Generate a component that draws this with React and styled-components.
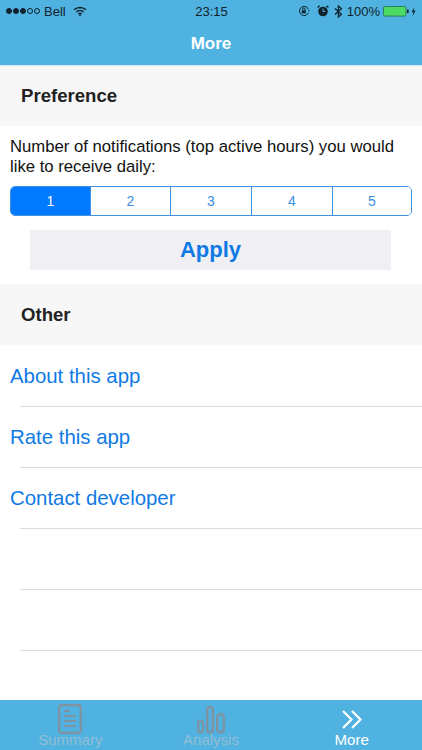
import React from "react";
import styled, { createGlobalStyle } from "styled-components";

const Global = createGlobalStyle`
  html, body { margin: 0; padding: 0; background: #fff; }
  body { font-family: "Liberation Sans", Arial, sans-serif; -webkit-font-smoothing: antialiased; }
  * { box-sizing: border-box; }
`;

const Phone = styled.div`
  width: 422px; height: 750px; display: flex; flex-direction: column; overflow: hidden; background: #fff;
`;
const Header = styled.header`
  height: 66px; flex: none; background: #50b2e0; display: flex; flex-direction: column;
  border-bottom: 1px solid #cfeaf5;
`;
const StatusBar = styled.div`
  height: 22px; padding: 0 5px 0 6px; display: grid; grid-template-columns: 1fr auto 1fr; align-items: center;
  font-size: 13px; color: #10222c;
`;
const StatusSide = styled.div`
  display: flex; align-items: center; gap: ${p => p.$gap || 4}px; justify-content: ${p => p.$end ? "flex-end" : "flex-start"};
`;
const Dots = styled.span`display: inline-flex; gap: 1px;`;
const Dot = styled.i`
  width: 6px; height: 6px; border-radius: 50%; border: 1px solid #10222c; background: ${p => p.$on ? "#10222c" : "transparent"};
`;
const Title = styled.div`
  flex: 1; display: flex; align-items: center; justify-content: center; color: #fff; font-size: 17px; font-weight: 700;
`;
const SectionHead = styled.div`
  height: ${p => p.$h}px; flex: none; background: #f7f7f7; display: flex; align-items: center; padding-left: 21px;
  font-size: 18.6px; font-weight: 700; color: #222;
`;
const Prose = styled.p`
  margin: 0; padding: 11px 10px 0; font-size: 16.7px; line-height: 20px; color: #111; height: 60px; flex: none; white-space: nowrap;
`;
const Segments = styled.div`
  margin: 0 10px; height: 30px; flex: none; display: grid; grid-template-columns: 79px 80px 81px 81px 1fr;
  border: 1px solid #3f90e0; border-radius: 5px; overflow: hidden;
`;
const Segment = styled.div`
  display: flex; align-items: center; justify-content: center; font-size: 14px;
  background: ${p => p.$active ? "#007aff" : "#fff"}; color: ${p => p.$active ? "#fff" : "#3a8de0"};
  & + & { border-left: 1px solid #3f90e0; }
`;
const ApplyButton = styled.div`
  margin: 14px 31px 14px 30px; height: 40px; flex: none; background: #efeff4; display: flex; align-items: center; justify-content: center;
  font-size: 22px; font-weight: 700; color: #0f7ae5;
`;
const Row = styled.div`
  height: 61px; flex: none; padding: 2px 0 0 10px; display: flex; align-items: center; position: relative;
  font-size: 20.4px; color: #0f7ae5;
  &::after { content: ""; position: absolute; left: 20px; right: 0; bottom: -1px; height: 1px; background: #dcdcdc; }
`;
const Spacer = styled.div`flex: 1;`;
const TabBar = styled.nav`
  height: 50px; flex: none; background: #50b2e0; display: grid; grid-template-columns: repeat(3, 1fr);
`;
const Tab = styled.div`
  display: flex; flex-direction: column; align-items: center; justify-content: flex-end;
  color: ${p => p.$active ? "#fff" : "#94bdd3"}; font-size: 15px; line-height: 16px; padding-bottom: 2px;
`;
const TabIcon = styled.svg`width: 32px; height: 32px; display: block; flex: none; margin-bottom: -2px;`;

export default function App() {
  return (
    <Phone>
      <Global />
      <Header>
        <StatusBar>
          <StatusSide $gap={4}>
            <Dots>
              <Dot $on /><Dot $on /><Dot $on /><Dot /><Dot />
            </Dots>
            <span>Bell</span>
            <svg width="14" height="11" viewBox="0 0 14 11" fill="none" stroke="#10222c" strokeWidth="1.5" style={{ marginLeft: 3 }}>
              <path d="M1 3.8C4.4.7 9.6.7 13 3.8" />
              <path d="M3.2 6C5.4 4 8.6 4 10.8 6" />
              <path d="M5.4 8.2C6.3 7.3 7.7 7.3 8.6 8.2" />
              <path d="M7 10.4 5.8 9.1c.7-.6 1.7-.6 2.4 0z" fill="#10222c" stroke="none" />
            </svg>
          </StatusSide>
          <span>23:15</span>
          <StatusSide $end $gap={4}>
            <svg width="12" height="12" viewBox="0 0 12 12" fill="none" stroke="#10222c" strokeWidth="1">
              <path d="M10.4 4.2A4.6 4.6 0 1 0 10.4 7.8" />
              <path d="M10 5.2h2L11 6.6z" fill="#10222c" stroke="none" />
              <rect x="3.8" y="5.3" width="4" height="3" fill="#10222c" stroke="none" />
              <path d="M4.6 5.3V4.2a1.2 1.2 0 0 1 2.4 0v1.1" />
            </svg>
            <svg width="12" height="12" viewBox="0 0 12 12" style={{ marginLeft: 3 }}>
              <circle cx="6" cy="6.5" r="4.8" fill="#10222c" />
              <path d="M6 3.5v3h2.2" stroke="#50b2e0" strokeWidth="1" fill="none" />
              <path d="M.6 2.6 2.6.8M11.4 2.6 9.4.8" stroke="#10222c" strokeWidth="1.4" />
            </svg>
            <svg width="9" height="13" viewBox="0 0 9 13" fill="none" stroke="#10222c" strokeWidth="1.3" style={{ marginLeft: 1 }}>
              <path d="M1 3.5 7.4 9.2 4.4 12V1l3 2.8L1 9.5" />
            </svg>
            <span>100%</span>
            <svg width="34" height="11" viewBox="0 0 34 11" style={{ marginLeft: -1 }}>
              <rect x=".5" y=".5" width="22.5" height="9.6" rx="1.6" fill="#4cd964" stroke="#2d7f5a" />
              <rect x="24" y="3.6" width="1.6" height="3.4" fill="#10222c" />
              <path d="M31.5 1 28.6 6h1.8l-.8 4 3-5.2h-1.8z" fill="#10222c" />
            </svg>
          </StatusSide>
        </StatusBar>
        <Title>More</Title>
      </Header>

      <SectionHead $h={60}>Preference</SectionHead>
      <Prose>Number of notifications (top active hours) you would<br />like to receive daily:</Prose>
      <Segments>
        {[1, 2, 3, 4, 5].map(n => <Segment key={n} $active={n === 1}>{n}</Segment>)}
      </Segments>
      <ApplyButton>Apply</ApplyButton>
      <SectionHead $h={61}>Other</SectionHead>
      <Row>About this app</Row>
      <Row>Rate this app</Row>
      <Row>Contact developer</Row>
      <Row />
      <Row />
      <Spacer />
      <TabBar>
        <Tab>
          <TabIcon viewBox="0 0 32 32" fill="none" stroke="#7f94a3" strokeWidth="2.4">
            <rect x="5.2" y="3.2" width="21.6" height="27.6" rx="2.5" />
            <path d="M10 9h6M10 14h12M10 19h12M10 24h12" strokeWidth="2" />
          </TabIcon>
          Summary
        </Tab>
        <Tab>
          <TabIcon viewBox="0 0 32 32" fill="none" stroke="#7f94a3" strokeWidth="2.4">
            <rect x="3.2" y="19" width="4.8" height="11.5" rx="2.4" />
            <rect x="12.2" y="5" width="5.6" height="25.5" rx="2.8" />
            <rect x="22.2" y="12" width="6.6" height="18.5" rx="3.3" />
          </TabIcon>
          Analysis
        </Tab>
        <Tab $active>
          <TabIcon viewBox="0 0 32 32" fill="none" stroke="#fff" strokeWidth="2.2">
            <path d="M7 9l8.5 8.5L7 26M16 9l8.5 8.5L16 26" />
          </TabIcon>
          More
        </Tab>
      </TabBar>
    </Phone>
  );
}
